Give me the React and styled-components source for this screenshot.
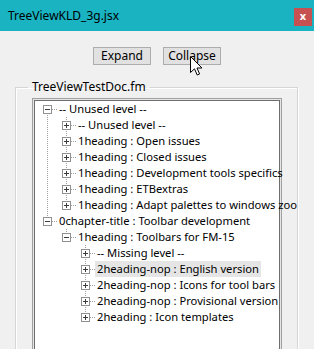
import React from 'react';
import styled, { createGlobalStyle } from 'styled-components';

const GlobalStyle = createGlobalStyle`
  html, body {
    margin: 0;
    padding: 0;
    background: #f0f0f0;
    overflow: hidden;
  }
  body {
    font-family: "Noto Sans", "Open Sans", sans-serif;
    font-size: 12px;
    color: #000;
  }
`;

const tree = [
  {
    label: '-- Unused level --',
    open: true,
    children: [
      { label: '-- Unused level --' },
      { label: '1heading : Open issues' },
      { label: '1heading : Closed issues' },
      { label: '1heading : Development tools specifics' },
      { label: '1heading : ETBextras' },
      { label: '1heading : Adapt palettes to windows zoo' },
    ],
  },
  {
    label: '0chapter-title : Toolbar development',
    open: true,
    children: [
      {
        label: '1heading : Toolbars for FM-15',
        open: true,
        children: [
          { label: '-- Missing level --' },
          { label: '2heading-nop : English version', hot: true },
          { label: '2heading-nop : Icons for tool bars' },
          { label: '2heading-nop : Provisional version' },
          { label: '2heading : Icon templates' },
        ],
      },
    ],
  },
];

// flatten the tree into rows, keeping track of which ancestor lines continue
function flatten(nodes, guides = [], out = [], root = true) {
  nodes.forEach((n, i) => {
    const last = i === nodes.length - 1;
    out.push({
      ...n,
      guides,
      first: root && i === 0,
      last,
    });
    if (n.open && n.children) {
      flatten(n.children, [...guides, !last], out, false);
    }
  });
  return out;
}

const rows = flatten(tree);

function Connector({ open, first, last }) {
  return (
    <svg width="19" height="16" viewBox="0 0 19 16" style={{ display: 'block', flex: 'none' }}>
      <g stroke="#a0a0a0" strokeWidth="1" strokeDasharray="1 1" shapeRendering="crispEdges">
        {!first && <line x1="9.5" y1="0" x2="9.5" y2="8" />}
        {!last && <line x1="9.5" y1="8" x2="9.5" y2="16" />}
        <line x1="10" y1="8.5" x2="19" y2="8.5" />
      </g>
      <rect x="5.5" y="4.5" width="8" height="8" fill="#fff" stroke="#919191" shapeRendering="crispEdges" />
      <g stroke="#3c3c3c" shapeRendering="crispEdges">
        <line x1="7" y1="8.5" x2="12" y2="8.5" />
        {!open && <line x1="9.5" y1="6" x2="9.5" y2="11" />}
      </g>
    </svg>
  );
}

function Cursor() {
  return (
    <CursorWrap>
      <svg width="13" height="21" viewBox="0 0 13 21">
        <path
          d="M0.5 0.5 L0.5 16.5 L4.5 12.8 L7.2 19 L9.6 18 L7 12 L12 12 Z"
          fill="#fff"
          stroke="#000"
          strokeWidth="1"
          strokeLinejoin="miter"
        />
      </svg>
    </CursorWrap>
  );
}

export default function App() {
  return (
    <Window>
      <GlobalStyle />
      <TitleBar>
        <Title>TreeViewKLD_3g.jsx</Title>
        <CloseButton>x</CloseButton>
      </TitleBar>
      <ButtonRow>
        <Button>Expand</Button>
        <Button>Collapse</Button>
      </ButtonRow>
      <Group>
        <Legend>TreeViewTestDoc.fm</Legend>
        <TreeFrame>
          {rows.map((r, idx) => (
            <Row key={idx}>
              {r.guides.map((g, j) => (
                <Guide key={j} $line={g} />
              ))}
              <Connector open={r.open} first={r.first} last={r.last} />
              <Label $hot={r.hot}>{r.label}</Label>
            </Row>
          ))}
        </TreeFrame>
      </Group>
      <Cursor />
    </Window>
  );
}

const Window = styled.div`
  position: relative;
  width: 314px;
  height: 349px;
  display: flex;
  flex-direction: column;
  background: #f0f0f0;
  overflow: hidden;
`;

const TitleBar = styled.div`
  height: 31px;
  flex: none;
  background: #19b3c2;
  display: flex;
  justify-content: space-between;
  align-items: flex-start;
  padding: 0 2px 0 8px;
`;

const Title = styled.div`
  line-height: 31px;
  font-size: 12px;
  color: #000;
`;

const CloseButton = styled.div`
  margin-top: 8px;
  width: 18px;
  height: 18px;
  background: #c75050;
  color: #fff;
  font-size: 11px;
  font-weight: bold;
  line-height: 16px;
  text-align: center;
`;

const ButtonRow = styled.div`
  display: flex;
  justify-content: center;
  gap: 12px;
  padding-top: 16px;
`;

const Button = styled.button`
  width: 58px;
  height: 18px;
  padding: 0;
  background: #e1e1e1;
  border: 1px solid #adadad;
  font-family: inherit;
  font-size: 12px;
  line-height: 14px;
  color: #000;
`;

const Group = styled.fieldset`
  margin: 14px 0 0 15px;
  padding: 0;
  width: 283px;
  box-sizing: border-box;
  height: 300px;
  border: 1px solid #d5d5d5;
  box-shadow: inset 1px 1px 0 #fff, 1px 1px 0 #fff;
`;

const Legend = styled.legend`
  margin-left: 12px;
  padding: 0 4px;
  line-height: 16px;
  font-size: 12px;
`;

const TreeFrame = styled.div`
  margin: 3px 0 0 16px;
  width: 250px;
  height: 270px;
  box-sizing: border-box;
  background: #fff;
  border: 1px solid #a0a0a0;
  box-shadow: inset 0 0 0 1px #e6e6e6, inset 0 0 0 2px #6e6e6e;
  padding: 2px 0 0 5px;
  font-size: 11.2px;
`;

const Row = styled.div`
  display: flex;
  height: 16px;
  align-items: stretch;
`;

const Guide = styled.div`
  flex: none;
  width: 19px;
  height: 16px;
  background-image: ${p =>
    p.$line ? 'repeating-linear-gradient(to bottom, #a0a0a0 0 1px, transparent 1px 2px)' : 'none'};
  background-size: 1px 100%;
  background-position: 9px 0;
  background-repeat: no-repeat;
`;

const Label = styled.span`
  padding: 0 2px;
  line-height: 16px;
  white-space: nowrap;
  background: ${p => (p.$hot ? '#e5e5e5' : 'transparent')};
`;

const CursorWrap = styled.div`
  position: absolute;
  left: 190px;
  top: 56px;
  line-height: 0;
`;
